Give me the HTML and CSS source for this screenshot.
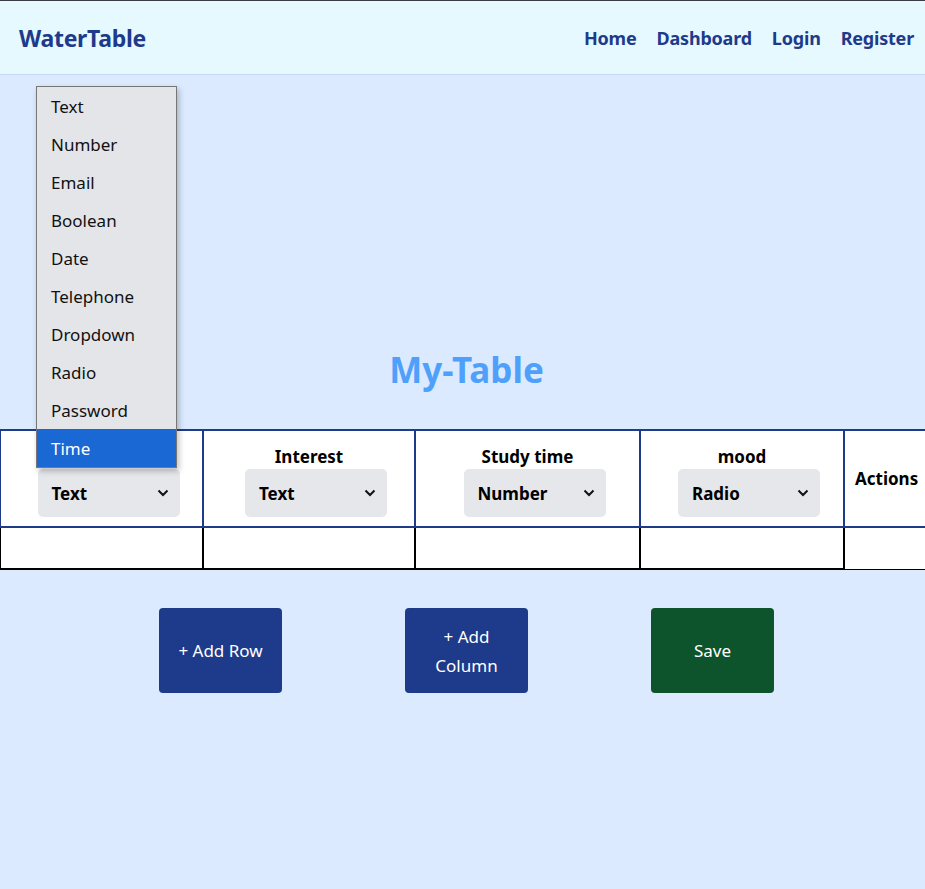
FILE: index.html
```html
<!DOCTYPE html>
<html>
<head>
<meta charset="utf-8">
<link rel="stylesheet" href="styles.css">
</head>
<body>
<header class="topbar">
  <div class="brand">WaterTable</div>
  <nav class="nav">
    <a>Home</a><a>Dashboard</a><a>Login</a><a>Register</a>
  </nav>
</header>
<main class="main">
  <h1 class="title">My-Table</h1>
  <div class="table-wrap">
    <table class="grid">
      <colgroup>
        <col class="c1"><col class="c2"><col class="c3"><col class="c4"><col class="c5">
      </colgroup>
      <thead>
        <tr>
          <th><div class="label"></div><div class="sel"><span>Text</span><svg width="12" height="8" viewBox="0 0 12 8"><path d="M1.5 1.5 L6 6 L10.5 1.5" fill="none" stroke="#111" stroke-width="2"/></svg></div></th>
          <th><div class="label">Interest</div><div class="sel"><span>Text</span><svg width="12" height="8" viewBox="0 0 12 8"><path d="M1.5 1.5 L6 6 L10.5 1.5" fill="none" stroke="#111" stroke-width="2"/></svg></div></th>
          <th><div class="label">Study time</div><div class="sel"><span>Number</span><svg width="12" height="8" viewBox="0 0 12 8"><path d="M1.5 1.5 L6 6 L10.5 1.5" fill="none" stroke="#111" stroke-width="2"/></svg></div></th>
          <th><div class="label">mood</div><div class="sel"><span>Radio</span><svg width="12" height="8" viewBox="0 0 12 8"><path d="M1.5 1.5 L6 6 L10.5 1.5" fill="none" stroke="#111" stroke-width="2"/></svg></div></th>
          <th class="actions">Actions</th>
        </tr>
      </thead>
      <tbody>
        <tr><td></td><td></td><td></td><td></td><td class="last"></td></tr>
      </tbody>
    </table>
  </div>
  <ul class="popup">
    <li>Text</li><li>Number</li><li>Email</li><li>Boolean</li><li>Date</li>
    <li>Telephone</li><li>Dropdown</li><li>Radio</li><li>Password</li><li class="active">Time</li>
  </ul>
  <div class="buttons">
    <button class="btn blue">+ Add Row</button>
    <button class="btn blue">+ Add Column</button>
    <button class="btn green">Save</button>
  </div>
</main>
</body>
</html>
```
FILE: styles.css
```css
* { box-sizing: border-box; }
html, body { margin: 0; padding: 0; }
body {
  background: #dbeafe;
  font-family: "Noto Sans", "Open Sans", sans-serif;
  width: 925px;
  height: 889px;
  overflow: hidden;
}
.topbar {
  height: 75px;
  border-top: 1px solid #3a3d42;
  border-bottom: 1px solid #c3dbf8;
  background: #e6f9ff;
  display: flex;
  align-items: center;
  justify-content: space-between;
  padding: 0 11px 0 19px;
}
.brand {
  font-size: 23px;
  font-weight: 700;
  color: #1e3a8a;
  letter-spacing: -0.3px;
}
.nav { display: flex; gap: 20px; }
.nav a {
  font-size: 18px;
  font-weight: 700;
  color: #1e3a8a;
  letter-spacing: -0.2px;
}
.main { position: relative; }
.title {
  margin: 0;
  padding-top: 272px;
  height: 354px;
  text-align: center;
  font-size: 35px;
  font-weight: 700;
  line-height: 46px;
  color: #4fa0fb;
  padding-left: 8px;
}
.table-wrap { width: 925px; overflow: hidden; }
.grid {
  border-collapse: collapse;
  width: 1000px;
  margin-left: -1px;
  table-layout: fixed;
  background: #fff;
}
.c1 { width: 203px; }
.c2 { width: 212px; }
.c3 { width: 225px; }
.c4 { width: 204px; }
.c5 { width: 156px; }
.grid th {
  height: 97px;
  border: 2px solid #1e3a8a;
  padding: 0;
  vertical-align: top;
  text-align: center;
}
.label {
  margin-top: 14px;
  height: 24px;
  font-size: 17px;
  font-weight: 700;
  line-height: 24px;
  color: #000;
}
.sel {
  display: inline-flex;
  align-items: center;
  justify-content: space-between;
  width: 142px;
  height: 48px;
  margin-left: 14px;
  padding: 0 11px 0 14px;
  background: #e5e7eb;
  border-radius: 5px;
  font-size: 17px;
  font-weight: 700;
  color: #000;
}
.grid th.actions {
  vertical-align: middle;
  text-align: left;
  padding-left: 10px;
  font-size: 17px;
  border-right: none;
}
.grid td {
  height: 42px;
  border: 2px solid #000;
  padding: 0;
}
.grid td.last { border-right: none; border-bottom-width: 1px; }
.popup {
  position: absolute;
  left: 36px;
  top: 11px;
  width: 141px;
  margin: 0;
  padding: 0;
  list-style: none;
  background: #e4e5e9;
  border: 1px solid #767676;
  box-shadow: 2px 3px 6px rgba(0,0,0,0.25);
  z-index: 5;
}
.popup li {
  height: 38px;
  line-height: 39px;
  padding-left: 14px;
  font-size: 17px;
  color: #111;
}
.popup li.active { background: #1a68d4; color: #fff; }
.buttons {
  display: flex;
  justify-content: center;
  gap: 123px;
  margin-top: 38px;
  padding-left: 8px;
}
.btn {
  width: 123px;
  height: 85px;
  border: none;
  border-radius: 4px;
  color: #fff;
  font-family: inherit;
  font-size: 17px;
  line-height: 29px;
  padding: 0 14px;
}
.blue { background: #1e3a8a; }
.green { background: #0d532b; }
```
